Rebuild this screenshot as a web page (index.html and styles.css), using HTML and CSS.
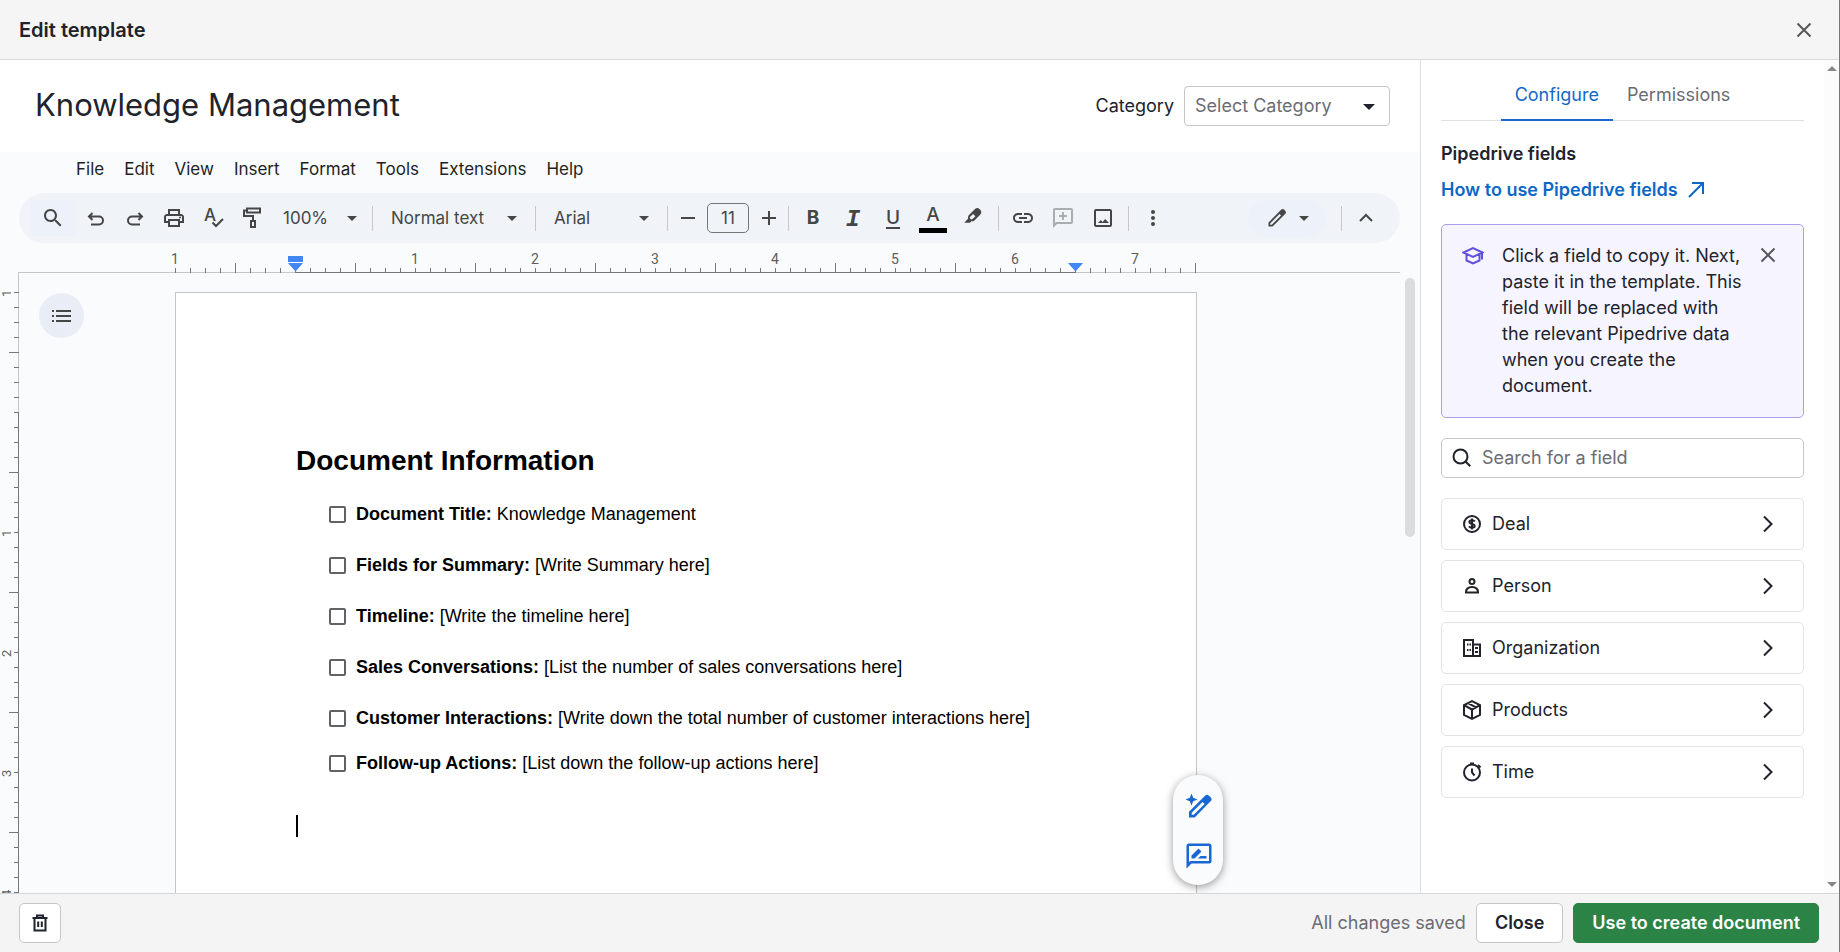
FILE: index.html
```html
<!DOCTYPE html>
<html lang="en">
<head>
<meta charset="UTF-8">
<meta name="viewport" content="width=device-width, initial-scale=1.0">
<title>Edit template</title>
<link rel="stylesheet" href="styles.css">
</head>
<body>

<header class="topbar">
    <h1>Edit template</h1>
    <button class="icon-btn" aria-label="Close editor">
        <svg width="16" height="16" viewBox="0 0 16 16" class="line"><path d="M1.5 1.5l13 13M14.5 1.5l-13 13"/></svg>
    </button>
</header>

<main class="main">
    <section class="editor">
        <div class="title-row">
            <h2>Knowledge Management</h2>
            <div class="category">
                <label for="category">Category</label>
                <span class="picker category-picker">
                    <select id="category">
                        <option>Select Category</option>
                    </select>
                </span>
            </div>
        </div>

        <nav class="menubar">
            <button>File</button>
            <button>Edit</button>
            <button>View</button>
            <button>Insert</button>
            <button>Format</button>
            <button>Tools</button>
            <button>Extensions</button>
            <button>Help</button>
        </nav>

        <div class="toolbar">
            <button class="tool search-tool" aria-label="Search the menus">
                <svg width="24" height="24" viewBox="0 0 24 24"><path d="M15.5 14h-.79l-.28-.27C15.41 12.59 16 11.11 16 9.5 16 5.91 13.09 3 9.5 3S3 5.91 3 9.5 5.91 16 9.5 16c1.61 0 3.09-.59 4.23-1.57l.27.28v.79l5 4.99L20.49 19l-4.99-5zm-6 0C7.01 14 5 11.99 5 9.5S7.01 5 9.5 5 14 7.01 14 9.5 11.99 14 9.5 14z"/></svg>
            </button>
            <button class="tool small" aria-label="Undo">
                <svg width="24" height="24" viewBox="0 0 24 24" class="line"><path d="M8.500 7L5 10.500 8.500 14M5.500 10.500H15a4 4 0 0 1 0 8H7"/></svg>
            </button>
            <button class="tool small" aria-label="Redo">
                <svg width="24" height="24" viewBox="0 0 24 24" class="line"><path d="M15.500 7l3.500 3.500-3.500 3.500M18.500 10.500H9a4 4 0 0 0 0 8h8"/></svg>
            </button>
            <button class="tool small" aria-label="Print">
                <svg width="24" height="24" viewBox="0 0 24 24"><path d="M19 8h-1V3H6v5H5c-1.660 0-3 1.340-3 3v6h4v4h12v-4h4v-6c0-1.660-1.340-3-3-3zM8 5h8v3H8V5zm8 12v2H8v-4h8v2zm2-2v-2H6v2H4v-4c0-.55.45-1 1-1h14c.55 0 1 .45 1 1v4h-2z"/><circle cx="18" cy="11.500" r="1"/></svg>
            </button>
            <button class="tool small" aria-label="Spelling and grammar check">
                <svg width="24" height="24" viewBox="0 0 24 24"><text x="3" y="15" class="glyph">A</text><path class="stroke" d="M11.500 16.500l3.500 3.500 7-7"/></svg>
            </button>
            <button class="tool small" aria-label="Paint format">
                <svg width="24" height="24" viewBox="0 0 24 24" class="line"><path d="M7 2.500h13v4H7zM7 4.500H4v5.500h9v5M11 15h4v6h-4z"/></svg>
            </button>
            <span class="picker zoom-picker"><select aria-label="Zoom"><option>100%</option></select></span>
            <span class="divider"></span>
            <span class="picker style-picker"><select aria-label="Styles"><option>Normal text</option></select></span>
            <span class="divider"></span>
            <span class="picker font-picker"><select aria-label="Font"><option>Arial</option></select></span>
            <span class="divider"></span>
            <button class="tool small" aria-label="Decrease font size">
                <svg width="14" height="14" viewBox="0 0 14 14" class="line"><path d="M0 7h14"/></svg>
            </button>
            <input class="font-size" type="text" value="11" aria-label="Font size">
            <button class="tool small" aria-label="Increase font size">
                <svg width="14" height="14" viewBox="0 0 14 14" class="line"><path d="M0 7h14M7 0v14"/></svg>
            </button>
            <span class="divider"></span>
            <div class="tool-group">
                <button class="tool letter bold" aria-label="Bold">B</button>
                <button class="tool letter italic" aria-label="Italic">I</button>
                <button class="tool letter underline" aria-label="Underline">U</button>
                <button class="tool letter color" aria-label="Text color">A</button>
                <button class="tool highlight" aria-label="Highlight color">
                    <svg width="20" height="20" viewBox="0 0 20 20"><path d="M6 8l6-6c1.200-1.200 3.200-1.200 4.400 0l1 1c1.200 1.200 1.200 3.200 0 4.400l-6 6c-.9.900-1.900 1.100-2.900.7L7 15.700H1.300l3.900-4.200c-.4-1.200-.2-2.500.8-3.500zm1.500 1.400c-.9.900-1 1.400-.5 1.900l.9.900c.5.500 1.100.4 1.900-.4l2.600-2.600-2.300-2.300z"/></svg>
                </button>
            </div>
            <span class="divider"></span>
            <div class="tool-group">
                <button class="tool" aria-label="Insert link">
                    <svg width="24" height="24" viewBox="0 0 24 24"><path d="M3.900 12c0-1.710 1.390-3.100 3.100-3.100h4V7H7c-2.760 0-5 2.240-5 5s2.240 5 5 5h4v-1.900H7c-1.710 0-3.100-1.390-3.100-3.100zM8 13h8v-2H8v2zm9-6h-4v1.900h4c1.710 0 3.100 1.390 3.100 3.100s-1.390 3.100-3.100 3.100h-4V17h4c2.760 0 5-2.240 5-5s-2.240-5-5-5z"/></svg>
                </button>
                <button class="tool" aria-label="Add comment" disabled>
                    <svg width="24" height="24" viewBox="0 0 24 24"><path d="M4 2h16c1.100 0 2 .9 2 2v12c0 1.100-.9 2-2 2H6l-4 4V4c0-1.100.9-2 2-2zm0 2v13l1.200-1H20V4zm7 2h2v3h3v2h-3v3h-2v-3H8V9h3z"/></svg>
                </button>
                <button class="tool" aria-label="Insert image">
                    <svg width="24" height="24" viewBox="0 0 24 24"><path d="M19 5v14H5V5h14m0-2H5c-1.100 0-2 .9-2 2v14c0 1.100.9 2 2 2h14c1.100 0 2-.9 2-2V5c0-1.100-.9-2-2-2zm-4.900 9.900l-2.500 3-1.800-2L7 17h11z"/></svg>
                </button>
            </div>
            <span class="divider"></span>
            <div class="tool-group">
                <button class="tool" aria-label="More">
                    <svg width="24" height="24" viewBox="0 0 24 24"><circle cx="12" cy="6" r="2"/><circle cx="12" cy="12" r="2"/><circle cx="12" cy="18" r="2"/></svg>
                </button>
            </div>
            <button class="mode-btn" aria-label="Editing mode">
                <svg width="24" height="24" viewBox="0 0 24 24"><path d="M20.400 4.900l-1.300-1.300c-.8-.8-2-.8-2.800 0L3.500 16.400V20.500h4.100L20.400 7.700c.8-.8.8-2 0-2.800zM6.800 18.700H5.300v-1.500L14.500 8 16 9.500z"/></svg>
                <span class="caret"></span>
            </button>
            <span class="divider"></span>
            <button class="tool collapse" aria-label="Hide the menus">
                <svg width="14" height="14" viewBox="0 0 14 14" class="line"><path d="M1 10l6-6 6 6"/></svg>
            </button>
        </div>

        <div class="ruler">
            <div class="ruler-scale">
                <span>1</span><span></span><span>1</span><span>2</span><span>3</span><span>4</span><span>5</span><span>6</span><span>7</span>
                <svg class="marker marker-left" width="15" height="16" viewBox="0 0 15 16"><path d="M0 0h15v6H0zM0 7h15l-7.500 8.500z"/></svg>
                <svg class="marker marker-right" width="15" height="16" viewBox="0 0 15 16"><path d="M0 7h15l-7.500 8.500z"/></svg>
            </div>
        </div>

        <div class="canvas">
            <div class="side-ruler">
                <div class="side-scale">
                    <span>1</span><span></span><span>1</span><span>2</span><span>3</span><span>4</span>
                </div>
            </div>
            <div class="outline">
                <button class="outline-btn" aria-label="Show document outline">
                    <svg width="20" height="12" viewBox="0 0 20 12"><path d="M0 0h2v2H0zM4 0h15v2H4zM0 5h2v2H0zM4 5h15v2H4zM0 10h2v2H0zM4 10h15v2H4z"/></svg>
                </button>
            </div>
            <article class="page">
                <h3>Document Information</h3>
                <ul class="checklist">
                    <li><input type="checkbox" id="item1"><label for="item1"><b>Document Title:</b> Knowledge Management</label></li>
                    <li><input type="checkbox" id="item2"><label for="item2"><b>Fields for Summary:</b> [Write Summary here]</label></li>
                    <li><input type="checkbox" id="item3"><label for="item3"><b>Timeline:</b> [Write the timeline here]</label></li>
                    <li><input type="checkbox" id="item4"><label for="item4"><b>Sales Conversations:</b> [List the number of sales conversations here]</label></li>
                    <li><input type="checkbox" id="item5"><label for="item5"><b>Customer Interactions:</b> [Write down the total number of customer interactions here]</label></li>
                    <li><input type="checkbox" id="item6"><label for="item6"><b>Follow-up Actions:</b> [List down the follow-up actions here]</label></li>
                </ul>
                <div class="cursor"></div>
            </article>
            <div class="scroll-track"><div class="scroll-thumb"></div></div>

            <div class="float-actions">
                <button aria-label="Help me write">
                    <svg width="30" height="30" viewBox="0 0 30 30"><path d="M7.500 1.500l1.700 4.300L13.500 7.500 9.200 9.200 7.500 13.500 5.800 9.200 1.500 7.500 5.800 5.800z"/><path d="M26.800 5.600l-2-2c-1-1-2.500-1-3.500 0L5 19.800v5.700h5.700L26.800 9.100c1-1 1-2.500 0-3.500zM9.800 22.800H7.700v-2.100L18.500 10l2.100 2.100z"/></svg>
                </button>
                <button aria-label="Suggest edits">
                    <svg width="30" height="30" viewBox="0 0 30 30"><path d="M5 2.500h20A2.500 2.500 0 0 1 27.500 5v15a2.500 2.500 0 0 1-2.500 2.500H7.500l-5 5V5A2.500 2.500 0 0 1 5 2.500zM5 5v16l1.500-1H25V5z"/><path d="M7.500 17.500v-3l7-7 3 3-7 7zM14 17.500l2.500-2.500h6v2.500z"/></svg>
                </button>
            </div>
        </div>
    </section>

    <aside class="panel">
        <div class="panel-body">
            <div class="tabs">
                <button class="tab active">Configure</button>
                <button class="tab">Permissions</button>
            </div>
            <h4>Pipedrive fields</h4>
            <a class="help-link" href="#">How to use Pipedrive fields
                <svg width="16" height="16" viewBox="0 0 16 16" class="line"><path d="M1 15L15 1M4 1h11v11"/></svg>
            </a>
            <div class="tip">
                <svg class="tip-icon" width="22" height="20" viewBox="0 0 22 20"><path d="M1.500 7.500L11 3l9.500 4.500L11 12zM4.500 9.500v6l6.500 3 6.500-3v-6M20 8v6.500"/></svg>
                <p>Click a field to copy it. Next, paste it in the template. This field will be replaced with the relevant Pipedrive data when you create the document.</p>
                <button class="icon-btn" aria-label="Dismiss">
                    <svg width="16" height="16" viewBox="0 0 16 16" class="line"><path d="M1.500 1.500l13 13M14.500 1.500l-13 13"/></svg>
                </button>
            </div>
            <label class="search">
                <svg width="20" height="20" viewBox="0 0 20 20" class="line"><circle cx="8.500" cy="8.500" r="7"/><path d="M13.300 13.300l5 5"/></svg>
                <input type="text" placeholder="Search for a field" aria-label="Search for a field">
            </label>
            <div class="fields">
                <button class="field">
                    <svg width="20" height="20" viewBox="0 0 20 20" class="line"><circle cx="10" cy="10" r="8"/><path d="M12.800 7.500C12.300 6.500 11.300 6.200 10 6.200c-1.500 0-2.600.6-2.600 1.800 0 2.700 5.300 1.300 5.300 4 0 1.200-1.200 1.800-2.700 1.800-1.400 0-2.400-.5-2.900-1.500M10 4.500v11"/></svg>
                    <span>Deal</span>
                    <svg class="line chevron" width="12" height="18" viewBox="0 0 12 18"><path d="M2 1.500L9.500 9 2 16.500"/></svg>
                </button>
                <button class="field">
                    <svg width="20" height="20" viewBox="0 0 20 20" class="line"><circle cx="10" cy="5.500" r="2.500"/><path d="M4 16.500c0-3.600 2.300-5.500 6-5.500s6 1.900 6 5.500z"/></svg>
                    <span>Person</span>
                    <svg class="line chevron" width="12" height="18" viewBox="0 0 12 18"><path d="M2 1.500L9.500 9 2 16.500"/></svg>
                </button>
                <button class="field">
                    <svg width="20" height="20" viewBox="0 0 20 20" class="line"><path d="M2 2h9v16H2zM11 6.500h7V18h-7M5 6.500h1.500M7.500 6.500H9M5 12h1.500M7.500 12H9M13 10h3M13 14h3"/></svg>
                    <span>Organization</span>
                    <svg class="line chevron" width="12" height="18" viewBox="0 0 12 18"><path d="M2 1.500L9.500 9 2 16.500"/></svg>
                </button>
                <button class="field">
                    <svg width="20" height="20" viewBox="0 0 20 20" class="line"><path d="M10 1.200l8 4v9.600l-8 4-8-4V5.200zM2 5.200l8 4.300 8-4.300M10 9.500v9.300M6 3.200l8 4.200"/></svg>
                    <span>Products</span>
                    <svg class="line chevron" width="12" height="18" viewBox="0 0 12 18"><path d="M2 1.500L9.500 9 2 16.500"/></svg>
                </button>
                <button class="field">
                    <svg width="20" height="20" viewBox="0 0 20 20" class="line"><circle cx="10" cy="10.500" r="8"/><path d="M10 6.500v4l2.500 3M8 1.500h4M16 3l2.500 2.500"/></svg>
                    <span>Time</span>
                    <svg class="line chevron" width="12" height="18" viewBox="0 0 12 18"><path d="M2 1.500L9.500 9 2 16.500"/></svg>
                </button>
            </div>
        </div>
        <div class="panel-scroll">
            <span class="arrow-up"></span>
            <span class="arrow-down"></span>
        </div>
    </aside>
</main>

<footer class="bottombar">
    <button class="btn trash" aria-label="Delete template">
        <svg width="20" height="20" viewBox="0 0 20 20" class="line"><path d="M2.500 5h15M7 5V2.500h6V5M4.500 5v12.500h11V5M8.200 8.500V14M11.800 8.500V14"/></svg>
    </button>
    <span class="status">All changes saved</span>
    <button class="btn">Close</button>
    <button class="btn primary">Use to create document</button>
</footer>

</body>
</html>
```
FILE: styles.css
```css
* {
    box-sizing: border-box;
}
body {
    margin: 0;
    height: 100vh;
    display: flex;
    flex-direction: column;
    overflow: hidden;
    border-right: 1px solid #77787a;
    background-color: #fff;
    color: #21232c;
    font-family: Inter, "Liberation Sans", sans-serif;
    font-size: 18px;
    line-height: 26px;
}
h1, h2, h3, h4, p, ul {
    margin: 0;
    padding: 0;
}
button, select, input {
    font: inherit;
    color: inherit;
    margin: 0;
}
button {
    background: none;
    border: none;
    padding: 0;
    cursor: pointer;
}
svg {
    display: block;
    flex: none;
    fill: currentColor;
}
.line {
    fill: none;
    stroke: currentColor;
    stroke-width: 2;
}
.icon-btn {
    color: #57585c;
}

/* top bar */
.topbar {
    display: flex;
    align-items: center;
    justify-content: space-between;
    height: 60px;
    padding: 0 27px 0 19px;
    background-color: #f5f5f5;
    border-bottom: 1px solid #d9dadc;
}
.topbar h1 {
    font-size: 20px;
    font-weight: 600;
}
.main {
    flex: 1;
    min-height: 0;
    display: flex;
}

/* editor */
.editor {
    flex: 1;
    min-width: 0;
    display: flex;
    flex-direction: column;
    background-color: #f9fbfd;
}
.title-row {
    display: flex;
    align-items: center;
    justify-content: space-between;
    height: 92px;
    padding: 0 30px 0 35px;
    background-color: #fff;
}
.title-row h2 {
    padding-bottom: 2px;
    font-size: 31px;
    font-weight: 400;
    line-height: 40px;
}
.category {
    display: flex;
    align-items: center;
    gap: 10px;
}
.picker {
    position: relative;
    display: flex;
}
.picker select {
    width: 100%;
    appearance: none;
    border: none;
    background: none;
    padding: 0 18px;
}
.picker::after,
.caret {
    content: "";
    border: 5px solid transparent;
    border-top-color: currentColor;
    border-bottom: none;
}
.picker::after {
    position: absolute;
    top: 50%;
    right: 18px;
    margin-top: -2px;
    pointer-events: none;
}
.category-picker {
    width: 206px;
}
.category-picker select {
    height: 40px;
    padding: 0 10px;
    border: 1px solid #c4c6ca;
    border-radius: 4px;
    background-color: #fff;
    color: #6b6c73;
}
.category-picker::after {
    right: 15px;
    border-width: 6px 6px 0;
}
.menubar {
    display: flex;
    gap: 20px;
    padding: 4px 0 11px 76px;
    color: #1f1f1f;
    font-size: 17px;
}

/* toolbar */
.toolbar {
    display: flex;
    align-items: center;
    height: 50px;
    margin: 0 20px 0 19px;
    padding: 0 10px 0 11px;
    border-radius: 25px;
    background-color: #f0f4f9;
    color: #444746;
    font-size: 17px;
}
.tool {
    display: flex;
    align-items: center;
    justify-content: center;
    width: 40px;
    height: 36px;
}
.tool:disabled {
    opacity: 0.4;
}
.search-tool {
    width: 46px;
    background-color: #edf2fa;
}
.small {
    width: 39px;
}
.tool-group {
    display: flex;
    padding: 0 5px 0 4px;
}
.divider {
    width: 1px;
    height: 25px;
    background-color: #c7c7c7;
}
.zoom-picker {
    width: 101px;
}
.zoom-picker select {
    padding: 0 12px;
}
.zoom-picker::after {
    right: 15px;
}
.style-picker {
    width: 162px;
}
.font-picker {
    width: 131px;
}
.font-size {
    width: 42px;
    height: 30px;
    padding: 0;
    border: 1px solid #747775;
    border-radius: 5px;
    background: none;
    text-align: center;
}
.letter {
    font-size: 19px;
    font-weight: 500;
}
.bold {
    font-weight: 700;
}
.italic {
    padding-top: 4px;
    font-family: "Liberation Mono", monospace;
    font-size: 24px;
    font-style: italic;
    font-weight: 700;
}
.underline {
    text-decoration: underline;
    text-decoration-thickness: 2px;
    text-underline-offset: 3px;
}
.color {
    width: 28px;
    height: 30px;
    margin: 3px 6px;
    padding-bottom: 2px;
    border-bottom: 5px solid #000;
}
.highlight {
    padding-bottom: 3px;
}
.glyph {
    font-size: 17px;
    font-weight: 500;
}
.stroke {
    fill: none;
    stroke: currentColor;
    stroke-width: 2;
}
.mode-btn {
    display: flex;
    align-items: center;
    justify-content: center;
    gap: 10px;
    width: 78px;
    height: 37px;
    margin: 0 15px 0 auto;
    border-radius: 18px;
    background-color: #edf2fa;
}
.collapse {
    width: 48px;
}

/* rulers */
.ruler {
    height: 30px;
    margin: 0 20px 0 18px;
    background: linear-gradient(90deg, #c4c7c5 277px, #747775 277px 1057px, #c4c7c5 1057px) 0 100% / 100% 1px no-repeat;
}
.ruler-scale {
    position: relative;
    display: flex;
    width: 1021px;
    height: 30px;
    margin-left: 157px;
    background:
        repeating-linear-gradient(90deg, #747775 0 1px, transparent 1px 15px) 0 100% / 100% 5px no-repeat,
        repeating-linear-gradient(90deg, #747775 0 1px, transparent 1px 120px) 60px 100% / 100% 10px no-repeat;
}
.ruler-scale span,
.side-scale span {
    flex: none;
    color: #5b5e5d;
    font-family: Roboto, sans-serif;
    font-size: 14px;
    text-align: center;
}
.ruler-scale span {
    width: 120px;
    line-height: 32px;
}
.ruler-scale span:first-child {
    margin-left: -60px;
}
.marker {
    position: absolute;
    bottom: 1px;
    fill: #4285f4;
}
.marker-left {
    left: 113px;
}
.marker-right {
    left: 893px;
}
.canvas {
    position: relative;
    flex: 1;
    min-height: 0;
    display: flex;
    overflow: hidden;
}
.side-ruler {
    flex: none;
    width: 19px;
    background: linear-gradient(#c4c7c5 139px, #747775 139px) 100% 0 / 1px 100% no-repeat;
}
.side-scale {
    display: flex;
    flex-direction: column;
    height: 100%;
    margin-top: 19px;
    background:
        repeating-linear-gradient(#747775 0 1px, transparent 1px 15px) 100% 0 / 5px 100% no-repeat,
        repeating-linear-gradient(#747775 0 1px, transparent 1px 120px) 100% 60px / 10px 100% no-repeat;
}
.side-scale span {
    height: 120px;
    width: 14px;
    font-size: 13px;
    line-height: 14px;
    writing-mode: vertical-rl;
    transform: rotate(180deg);
}
.side-scale span:first-child {
    margin-top: -59px;
}

/* document */
.outline {
    flex: none;
    width: 156px;
    padding: 20px;
}
.outline-btn {
    display: flex;
    align-items: center;
    justify-content: center;
    width: 45px;
    height: 45px;
    border-radius: 50%;
    background-color: #e9eef6;
    color: #444746;
}
.page {
    flex: none;
    width: 1022px;
    height: 1320px;
    margin-top: 19px;
    padding: 152px 120px;
    border: 1px solid #c4c7c5;
    background-color: #fff;
    color: #000;
    font-family: "Liberation Sans", Arial, sans-serif;
    font-size: 18px;
    line-height: 24px;
}
.page h3 {
    margin-bottom: 25px;
    font-size: 28px;
    line-height: 32px;
}
.checklist {
    list-style: none;
    padding-left: 33px;
}
.checklist li {
    display: flex;
    align-items: center;
    gap: 10px;
    margin-bottom: 27px;
}
.checklist li:nth-last-child(-n+2) {
    margin-bottom: 21px;
}
.checklist input {
    appearance: none;
    width: 17px;
    height: 17px;
    border: 2px solid #5f6368;
    border-radius: 2px;
}
.checklist input:checked {
    background-color: #5f6368;
}
.cursor {
    width: 2px;
    height: 22px;
    margin-top: 40px;
    background-color: #000;
}
.scroll-track {
    margin-left: auto;
    padding: 5px 5px 0 0;
}
.scroll-thumb {
    width: 10px;
    height: 259px;
    border-radius: 5px;
    background-color: #dadce0;
}
.float-actions {
    position: absolute;
    right: 197px;
    bottom: 8px;
    display: flex;
    flex-direction: column;
    gap: 19px;
    padding: 17px 9px 14px 11px;
    border-radius: 25px;
    background-color: #f9fbfd;
    box-shadow: 0 2px 8px rgba(0, 0, 0, 0.4);
    color: #1967d2;
}

/* side panel */
.panel {
    flex: none;
    width: 419px;
    display: flex;
    border-left: 1px solid #dcdde0;
}
.panel-body {
    flex: 1;
    padding: 0 20px;
}
.tabs {
    display: flex;
    justify-content: center;
    height: 61px;
    margin-bottom: 20px;
    border-bottom: 1px solid #dfe0e3;
}
.tab {
    height: 61px;
    padding: 10px 14px 0;
    border-bottom: 2px solid transparent;
    color: #6b6c73;
}
.tab.active {
    border-color: #1d68d6;
    color: #1168cc;
}
.panel h4 {
    margin-bottom: 10px;
    font-size: 18px;
    font-weight: 600;
}
.help-link {
    display: flex;
    align-items: center;
    gap: 10px;
    color: #0d68c5;
    font-weight: 600;
    text-decoration: none;
}
.tip {
    display: flex;
    align-items: flex-start;
    margin: 21px 0 20px;
    padding: 18px 27px 18px 20px;
    border: 1px solid #ab9ef0;
    border-radius: 5px;
    background-color: #f6f4ff;
}
.tip p {
    flex: 1;
    padding: 0 12px 0 18px;
}
.tip-icon {
    margin-top: 2px;
    fill: none;
    stroke: #6150e0;
    stroke-width: 2;
}
.tip .icon-btn {
    padding-top: 4px;
}
.search {
    display: flex;
    align-items: center;
    gap: 10px;
    height: 40px;
    margin-bottom: 20px;
    padding: 0 10px;
    border: 1px solid #c4c6ca;
    border-radius: 5px;
}
.search input {
    flex: 1;
    min-width: 0;
    padding: 0;
    border: none;
    outline: none;
    background: none;
}
.search input::placeholder {
    color: #6b6c73;
}
.fields {
    display: flex;
    flex-direction: column;
    gap: 10px;
}
.field {
    display: flex;
    align-items: center;
    gap: 10px;
    height: 52px;
    padding: 0 29px 0 20px;
    border: 1px solid #e2e3e5;
    border-radius: 5px;
}
.chevron {
    margin-left: auto;
}
.panel-scroll {
    display: flex;
    flex-direction: column;
    justify-content: space-between;
    width: 15px;
    padding: 6px 3px;
    background-color: #fcfcfc;
}
.arrow-up,
.arrow-down {
    border: 5px solid transparent;
}
.arrow-up {
    border-top: none;
    border-bottom-color: #858688;
}
.arrow-down {
    border-bottom: none;
    border-top-color: #858688;
}

/* bottom bar */
.bottombar {
    display: flex;
    align-items: center;
    gap: 10px;
    height: 59px;
    padding: 0 20px 0 19px;
    background-color: #f4f4f5;
    border-top: 1px solid #d5d6d9;
}
.status {
    margin-left: auto;
    color: #6b6c73;
}
.btn {
    height: 40px;
    padding: 0 18px;
    border: 1px solid #c4c6ca;
    border-radius: 5px;
    background-color: #fff;
    font-weight: 600;
}
.trash {
    padding: 0 10px;
}
.primary {
    border-color: #2b8446;
    background-color: #2b8446;
    color: #fff;
}
```
